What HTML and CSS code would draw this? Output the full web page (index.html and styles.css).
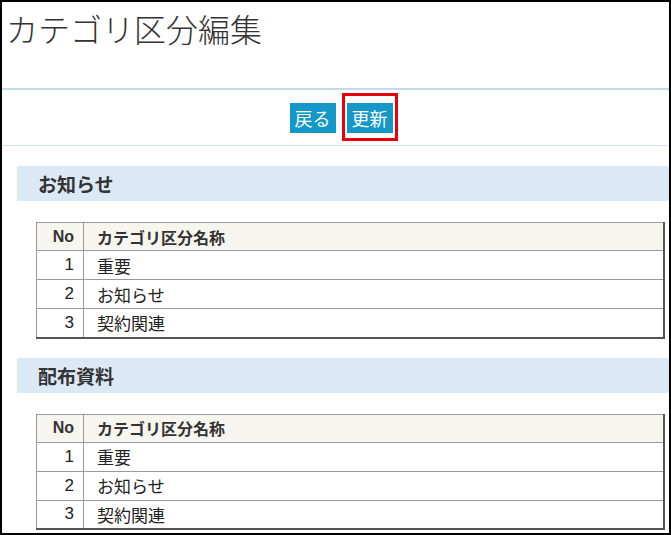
FILE: index.html
```html
<!DOCTYPE html>
<html lang="ja">
<head>
    <meta charset="UTF-8">
    <title>カテゴリ区分編集</title>
    <link rel="stylesheet" href="styles.css">
</head>
<body>
    <div class="frame">
        <div class="page-head">
            <h1>カテゴリ区分編集</h1>
        </div>

        <div class="toolbar">
            <button type="button" class="btn">戻る</button>
            <span class="mark"><button type="button" class="btn">更新</button></span>
        </div>

        <h2 class="section">お知らせ</h2>
        <table class="list">
            <tr><th class="no">No</th><th>カテゴリ区分名称</th></tr>
            <tr><td class="no">1</td><td>重要</td></tr>
            <tr><td class="no">2</td><td>お知らせ</td></tr>
            <tr><td class="no">3</td><td>契約関連</td></tr>
        </table>

        <h2 class="section">配布資料</h2>
        <table class="list">
            <tr><th class="no">No</th><th>カテゴリ区分名称</th></tr>
            <tr><td class="no">1</td><td>重要</td></tr>
            <tr><td class="no">2</td><td>お知らせ</td></tr>
            <tr><td class="no">3</td><td>契約関連</td></tr>
        </table>
    </div>
</body>
</html>
```

FILE: styles.css
```css
* {
    margin: 0;
    padding: 0;
    box-sizing: border-box;
}

html, body {
    width: 100%;
    height: 100%;
    background: #fff;
}

body {
    font-family: "Liberation Sans", "Noto Sans CJK JP", sans-serif;
    color: #222;
}

.frame {
    height: 100%;
    border: 2px solid #000;
    overflow: hidden;
}

.page-head {
    height: 88px;
    border-bottom: 2px solid #c2daf0;
}

.page-head h1 {
    font-family: "Noto Sans CJK JP", sans-serif;
    font-size: 32px;
    font-weight: 300;
    line-height: 40px;
    color: #333;
    padding: 6px 0 0 4px;
}

.toolbar {
    display: flex;
    justify-content: center;
    gap: 11px;
    padding: 13px 0 12px 11px;
    border-bottom: 1px solid #d4e4f2;
}

.btn {
    height: 30px;
    padding: 0 5px;
    border: none;
    background-color: #1497c9;
    color: #fff;
    font-family: "Noto Sans CJK JP", sans-serif;
    font-size: 18px;
    line-height: 30px;
}

/* 赤枠：更新ボタンの強調 */
.mark {
    position: relative;
    display: block;
}

.mark::after {
    content: "";
    position: absolute;
    top: -10px;
    bottom: -8px;
    left: -5px;
    right: -5px;
    border: 3px solid #e8000b;
}

.section {
    margin: 20px 0 0 15px;
    height: 35px;
    padding-left: 21px;
    background-color: #dbe9f7;
    font-family: "Noto Sans CJK JP", sans-serif;
    font-size: 19px;
    font-weight: bold;
    line-height: 35px;
    color: #333;
}

.section + .list {
    margin-top: 21px;
}

.list + .section {
    margin-top: 19px;
}

.list {
    margin-left: 34px;
    width: 629px;
    border-collapse: collapse;
    border-top: 1px solid #999;
    border-left: 1px solid #999;
    border-right: 2px solid #555;
    border-bottom: 2px solid #555;
}

.list th,
.list td {
    height: 29px;
    border: 1px solid #999;
    padding: 0 0 0 13px;
    text-align: left;
    font-size: 17px;
    font-weight: normal;
}

.list th {
    height: 28px;
    background-color: #f7f5f0;
    font-size: 16px;
    font-weight: bold;
    color: #333;
}

.list .no {
    width: 47px;
    padding: 0 9px 0 0;
    text-align: right;
    font-size: 17px;
}

.list th.no {
    font-size: 16px;
}
```
